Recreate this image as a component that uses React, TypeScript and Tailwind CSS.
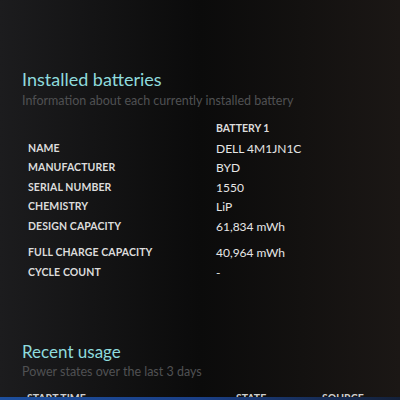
const rows: { label: string; value: string; gap?: boolean }[] = [
  { label: 'Name', value: 'DELL 4M1JN1C' },
  { label: 'Manufacturer', value: 'BYD' },
  { label: 'Serial number', value: '1550' },
  { label: 'Chemistry', value: 'LiP' },
  { label: 'Design capacity', value: '61,834 mWh' },
  { label: 'Full charge capacity', value: '40,964 mWh', gap: true },
  { label: 'Cycle count', value: '-' },
];

const App = () => {
  return (
    <div
      className="relative w-[400px] h-[400px] overflow-hidden bg-gradient-to-r from-[#1c1c1e] via-[#0b0b0b] to-[#1b1715]"
      style={{ fontFamily: 'Lato, "Open Sans", sans-serif' }}
    >
      <div className="pl-[22px] pt-[67px]">
        {/* Installed batteries */}
        <h1 className="text-[18px] leading-[24px] text-[#8fdbdd]">Installed batteries</h1>
        <p className="text-[12.5px] leading-[18px] text-[#505153] mt-[1px]">
          Information about each currently installed battery
        </p>

        <div className="mt-[9px] pl-[6px] text-[#dcdcdc]">
          <div className="flex h-[20px] items-center">
            <div className="w-[188px]" />
            <div className="text-[10.5px] font-bold">BATTERY 1</div>
          </div>
          {rows.map(r => (
            <div key={r.label} className={`flex h-[19.5px] items-center ${r.gap ? 'mt-[7px]' : ''}`}>
              <div className="w-[188px] text-[10.5px] font-bold uppercase tracking-[0.1px]">{r.label}</div>
              <div className="text-[12px] text-[#e6e6e6]">{r.value}</div>
            </div>
          ))}
        </div>

        {/* Recent usage */}
        <h2 className="mt-[58px] text-[17px] leading-[22px] text-[#8fdbdd]">Recent usage</h2>
        <p className="text-[12.5px] leading-[18px] text-[#505153]">Power states over the last 3 days</p>

        <div className="flex mt-[10px] pl-[5px] text-[10.5px] font-bold text-[#cfcfcf]">
          <div className="w-[209px]">START TIME</div>
          <div className="w-[86px]">STATE</div>
          <div>SOURCE</div>
        </div>
      </div>
      <div className="absolute left-0 bottom-0 w-[400px] h-[3px] bg-gradient-to-r from-[#1d4f9e] via-[#1a3f86] to-[#14213a]" />
    </div>
  );
};

export default App;
